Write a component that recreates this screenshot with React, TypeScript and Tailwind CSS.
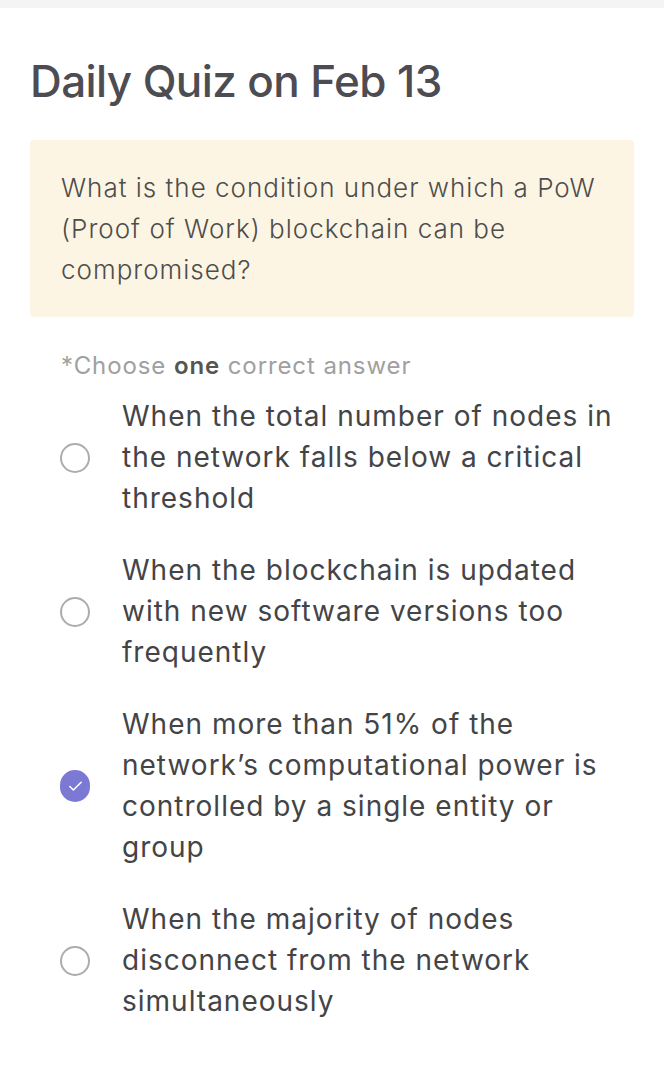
import { Check } from 'lucide-react';

// Quiz options
const options = [
  { id: 'a', text: 'When the total number of nodes in the network falls below a critical threshold' },
  { id: 'b', text: 'When the blockchain is updated with new software versions too frequently' },
  { id: 'c', text: 'When more than 51% of the network\u2019s computational power is controlled by a single entity or group' },
  { id: 'd', text: 'When the majority of nodes disconnect from the network simultaneously' },
];

const selected = 'c';

export default function App() {
  return (
    <div className="min-h-screen bg-white font-['Inter',sans-serif]">
      <div className="h-2 bg-[#f4f4f4]" />

      <div className="px-[30px] pb-16">
        {/* Title */}
        <h1 className="mt-[47px] text-[44px] leading-[52px] font-medium tracking-[-0.6px] text-[#4c4c52]">
          Daily Quiz on Feb 13
        </h1>

        {/* Question */}
        <div className="mt-[33px] rounded-sm bg-[#fdf5e3] pl-[31px] pr-[24px] py-[27px] text-[26px] leading-[41px] font-light tracking-[1px] text-[#4d4d4d]">
          What is the condition under which a PoW (Proof of Work) blockchain can be compromised?
        </div>

        <p className="mt-[34px] pl-[31px] text-[24px] leading-[30px] tracking-[0.9px] text-[#a0a0a0]">
          *Choose <span className="font-semibold text-[#555]">one</span> correct answer
        </p>

        {/* Options */}
        <div className="mt-[15px] flex flex-col gap-[31px]">
          {options.map((opt) => {
            const checked = opt.id === selected;
            return (
              <div key={opt.id} className="flex items-center">
                <div className="ml-[30px] w-[30px] shrink-0 flex justify-center">
                  {checked ? (
                    <span className="flex h-[32px] w-[32px] items-center justify-center rounded-full bg-[#7b79d3]">
                      <Check className="h-[17px] w-[17px] text-white" strokeWidth={2.25} />
                    </span>
                  ) : (
                    <span className="h-[30px] w-[30px] rounded-full border-2 border-[#acacac]" />
                  )}
                </div>
                <p className="ml-[32px] pr-[2px] text-[28px] leading-[41px] tracking-[1px] text-[#444447]">
                  {opt.text}
                </p>
              </div>
            );
          })}
        </div>
      </div>
    </div>
  );
}
